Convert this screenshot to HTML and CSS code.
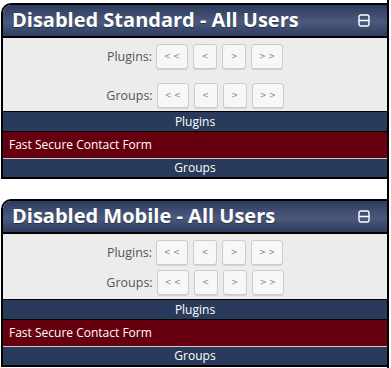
FILE: index.html
```html
<!DOCTYPE html>
<html lang="en">
<head>
	<meta charset="UTF-8">
	<title>Disabled Plugins</title>
	<link rel="stylesheet" href="styles.css">
</head>
<body>
	<div id="wrap">
		<div class="panel">
			<div class="panel-head">
				<h2>Disabled Standard - All Users</h2>
				<svg class="toggle" width="12" height="13" viewBox="0 0 12 13">
					<rect x="1" y="1" width="10" height="11" rx="2" fill="none" stroke="#fff" stroke-width="1.4"/>
					<line x1="1" y1="6.5" x2="11" y2="6.5" stroke="#fff" stroke-width="1.4"/>
				</svg>
			</div>
			<div class="panel-body">
				<div class="pager">
					<span class="label">Plugins:</span>
					<button class="wide">&lt; &lt;</button>
					<button>&lt;</button>
					<button>&gt;</button>
					<button class="wide">&gt; &gt;</button>
				</div>
				<div class="pager">
					<span class="label">Groups:</span>
					<button class="wide">&lt; &lt;</button>
					<button>&lt;</button>
					<button>&gt;</button>
					<button class="wide">&gt; &gt;</button>
				</div>
			</div>
			<div class="bar">Plugins</div>
			<div class="item">Fast Secure Contact Form</div>
			<div class="bar last">Groups</div>
		</div>

		<div class="panel">
			<div class="panel-head">
				<h2>Disabled Mobile - All Users</h2>
				<svg class="toggle" width="12" height="13" viewBox="0 0 12 13">
					<rect x="1" y="1" width="10" height="11" rx="2" fill="none" stroke="#fff" stroke-width="1.4"/>
					<line x1="1" y1="6.5" x2="11" y2="6.5" stroke="#fff" stroke-width="1.4"/>
				</svg>
			</div>
			<div class="panel-body tight">
				<div class="pager">
					<span class="label">Plugins:</span>
					<button class="wide">&lt; &lt;</button>
					<button>&lt;</button>
					<button>&gt;</button>
					<button class="wide">&gt; &gt;</button>
				</div>
				<div class="pager">
					<span class="label">Groups:</span>
					<button class="wide">&lt; &lt;</button>
					<button>&lt;</button>
					<button>&gt;</button>
					<button class="wide">&gt; &gt;</button>
				</div>
			</div>
			<div class="bar">Plugins</div>
			<div class="item">Fast Secure Contact Form</div>
			<div class="bar last">Groups</div>
		</div>
	</div>
</body>
</html>
```

FILE: styles.css
```css
* {
	margin: 0;
	padding: 0;
	box-sizing: border-box;
}
body {
	font-family: "Open Sans", "Liberation Sans", sans-serif;
	font-size: 12px;
	background: #fff;
}
#wrap {
	width: 389px;
	padding: 3px 0 0 1px;
	border-right: 2px solid #000;
	min-height: 368px;
}
.panel {
	border: 2px solid #000;
	border-right: none;
	border-top-left-radius: 10px;
	overflow: hidden;
	margin-bottom: 20px;
}
.panel-head {
	height: 33px;
	display: flex;
	align-items: center;
	justify-content: space-between;
	padding: 0 17px 0 9px;
	border-bottom: 2px solid #000;
	background: linear-gradient(#2c3b5e, #4b5a7c 55%, #2e3d5f);
}
.panel-head h2 {
	color: #fff;
	font-size: 20px;
	font-weight: 700;
	line-height: 1;
	margin-top: -2px;
	text-shadow: 0 1px 1px rgba(0,0,0,.4);
}
.toggle {
	display: block;
}
.panel-body {
	background: #ececec;
	padding: 6px 0 3px;
	display: flex;
	flex-direction: column;
	gap: 14px;
}
.panel-body.tight {
	gap: 5px;
	padding-bottom: 4px;
}
.pager {
	display: flex;
	justify-content: center;
	align-items: center;
	gap: 5px;
}
.pager .label {
	color: #555;
	font-size: 12.5px;
	margin-right: -1px;
}
.pager button {
	width: 24px;
	height: 25px;
	background: #f7f7f7;
	border: 1px solid #ccc;
	border-radius: 3px;
	box-shadow: 0 1px 0 #d4d4d4;
	color: #8a8a8a;
	font-family: "DejaVu Sans", sans-serif;
	font-size: 8px;
	outline: none;
}
.pager button.wide {
	width: 32px;
}
.bar {
	background: #2a3a5b;
	color: #fff;
	text-align: center;
	height: 20px;
	line-height: 19px;
	border-top: 1px solid #000;
}
.bar.last {
	border-top: none;
	height: 18px;
	line-height: 18px;
}
.item {
	background: #66000f;
	color: #fff;
	height: 28px;
	line-height: 26px;
	padding-left: 6px;
	border-top: 1px solid #000;
	border-bottom: 1px solid #ccc;
}
```
